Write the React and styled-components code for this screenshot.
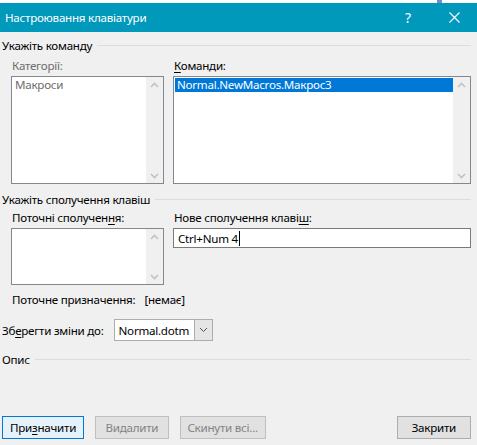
import React from 'react';
import styled, { createGlobalStyle } from 'styled-components';

const GlobalStyle = createGlobalStyle`
  html, body {
    margin: 0;
    padding: 0;
    background: #f0f0f0;
  }
  body {
    font-family: "Noto Sans", "Open Sans", sans-serif;
    font-size: 11.6px;
    letter-spacing: -0.25px;
    color: #000;
  }
`;

const Window = styled.div`
  width: 477px;
  height: 445px;
  display: flex;
  flex-direction: column;
  background: #f0f0f0;
  overflow: hidden;
`;

const TopStrip = styled.div`
  height: 3px;
  background: #fff;
  display: flex;
  padding-left: 437px;
`;

const StripMark = styled.div`
  width: 5px;
  height: 3px;
  background: #6c8fd0;
`;

const TitleBar = styled.div`
  height: 29px;
  background: #0099bc;
  color: #fff;
  display: flex;
  align-items: center;
  padding-left: 5px;
`;

const TitleText = styled.div`
  flex: 1;
`;

const TitleButton = styled.div`
  width: 46px;
  height: 29px;
  display: flex;
  align-items: center;
  justify-content: center;
  font-size: 14px;
`;

const Content = styled.div`
  display: flex;
  flex-direction: column;
  padding: 0 6px 0 2px;
`;

const GroupHeader = styled.div`
  display: flex;
  align-items: center;
  gap: 5px;
  height: 16px;
  margin-top: ${p => p.$top}px;
`;

const Rule = styled.div`
  flex: 1;
  height: 1px;
  background: #dcdcdc;
`;

const Columns = styled.div`
  display: flex;
  gap: 9px;
  padding-left: 9px;
  margin-top: ${p => p.$top}px;
`;

const Column = styled.div`
  display: flex;
  flex-direction: column;
  width: ${p => p.$w}px;
`;

const Label = styled.div`
  height: 16px;
  line-height: 16px;
  margin-bottom: 2px;
  padding-left: 1px;
  color: ${p => (p.$disabled ? '#6d6d6d' : '#000')};
  white-space: nowrap;
`;

const U = styled.span`
  text-decoration: underline;
  text-underline-offset: 2px;
`;

const ListBox = styled.div`
  height: ${p => p.$h}px;
  box-sizing: border-box;
  border: 1px solid #828790;
  background: #fff;
  display: flex;
`;

const ListItems = styled.div`
  flex: 1;
  padding: 1px 0 0 1px;
`;

const ListItem = styled.div`
  height: 14px;
  line-height: 14px;
  padding-left: 2px;
  color: ${p => (p.$selected ? '#fff' : p.$muted ? '#6d6d6d' : '#000')};
  background: ${p => (p.$selected ? '#0078d7' : 'transparent')};
  white-space: nowrap;
`;

const ScrollTrack = styled.div`
  width: 17px;
  background: #f0f0f0;
  display: flex;
  flex-direction: column;
  justify-content: space-between;
  align-items: center;
  padding: 5px 0 4px;
`;

const TextInput = styled.div`
  height: 20px;
  box-sizing: border-box;
  border: 1px solid #7a7a7a;
  background: #fff;
  display: flex;
  align-items: center;
  padding-left: 4px;
`;

const Caret = styled.span`
  display: inline-block;
  width: 1px;
  height: 15px;
  background: #000;
  margin-left: 1px;
`;

const InfoRow = styled.div`
  display: flex;
  height: 16px;
  align-items: center;
  padding-left: 10px;
  margin-top: 6px;
`;

const InfoValue = styled.span`
  margin-left: 9px;
`;

const SaveRow = styled.div`
  display: flex;
  align-items: center;
  gap: 10px;
  margin-top: 12px;
`;

const Select = styled.div`
  width: 99px;
  height: 22px;
  box-sizing: border-box;
  border: 1px solid #adadad;
  background: #fff;
  display: flex;
`;

const SelectValue = styled.div`
  flex: 1;
  display: flex;
  align-items: center;
  padding-left: 4px;
`;

const SelectArrow = styled.div`
  width: 17px;
  background: #e5e5e5;
  border-left: 1px solid #adadad;
  display: flex;
  align-items: center;
  justify-content: center;
`;

const ButtonBar = styled.div`
  display: flex;
  gap: 11px;
  margin-top: 49px;
`;

const Button = styled.div`
  height: 23px;
  box-sizing: border-box;
  width: ${p => p.$w}px;
  display: flex;
  align-items: center;
  justify-content: center;
  border: 1px solid
    ${p => (p.$default ? '#0078d7' : p.$disabled ? '#bfbfbf' : '#adadad')};
  background: ${p => (p.$default ? '#e5f1fb' : '#e1e1e1')};
  color: ${p => (p.$disabled ? '#838383' : '#000')};
  margin-left: ${p => p.$push || 0}px;
`;

function Chevron({ up }) {
  return (
    <svg width="9" height="6" viewBox="0 0 9 6">
      <path
        d={up ? 'M1 5 L4.5 1.5 L8 5' : 'M1 1 L4.5 4.5 L8 1'}
        fill="none"
        stroke="#c2c2c2"
        strokeWidth="1.6"
      />
    </svg>
  );
}

function Scroller() {
  return (
    <ScrollTrack>
      <Chevron up />
      <Chevron />
    </ScrollTrack>
  );
}

export default function App() {
  return (
    <Window>
      <GlobalStyle />
      <TopStrip>
        <StripMark />
      </TopStrip>
      <TitleBar>
        <TitleText>Настроювання клавіатури</TitleText>
        <TitleButton>?</TitleButton>
        <TitleButton>
          <svg width="11" height="11" viewBox="0 0 11 11">
            <path d="M0.5 0.5 L10.5 10.5 M10.5 0.5 L0.5 10.5" stroke="#fff" strokeWidth="1.1" />
          </svg>
        </TitleButton>
      </TitleBar>
      <Content>
        <GroupHeader $top={5}>
          Укажіть команду
          <Rule />
        </GroupHeader>
        <Columns $top={5}>
          <Column $w={153}>
            <Label $disabled>Категорії:</Label>
            <ListBox $h={108}>
              <ListItems>
                <ListItem $muted>Макроси</ListItem>
              </ListItems>
              <Scroller />
            </ListBox>
          </Column>
          <Column $w={298}>
            <Label>
              <U>К</U>оманди:
            </Label>
            <ListBox $h={108}>
              <ListItems>
                <ListItem $selected>Normal.NewMacros.Макрос3</ListItem>
              </ListItems>
              <Scroller />
            </ListBox>
          </Column>
        </Columns>
        <GroupHeader $top={7}>
          Укажіть сполучення клавіш
          <Rule />
        </GroupHeader>
        <Columns $top={3}>
          <Column $w={153}>
            <Label>
              Поточні сполучен<U>н</U>я:
            </Label>
            <ListBox $h={57}>
              <ListItems />
              <Scroller />
            </ListBox>
          </Column>
          <Column $w={298}>
            <Label>
              Нове сполучення клаві<U>ш</U>:
            </Label>
            <TextInput>
              Ctrl+Num 4<Caret />
            </TextInput>
          </Column>
        </Columns>
        <InfoRow>
          Поточне призначення:
          <InfoValue>[немає]</InfoValue>
        </InfoRow>
        <SaveRow>
          <span>
            Зб<U>е</U>регти зміни до:
          </span>
          <Select>
            <SelectValue>Normal.dotm</SelectValue>
            <SelectArrow>
              <svg width="9" height="6" viewBox="0 0 9 6">
                <path d="M1 1 L4.5 4.5 L8 1" fill="none" stroke="#555" strokeWidth="1" />
              </svg>
            </SelectArrow>
          </Select>
        </SaveRow>
        <GroupHeader $top={10}>
          Опис
          <Rule />
        </GroupHeader>
        <ButtonBar>
          <Button $w={83} $default>
            При<U>з</U>начити
          </Button>
          <Button $w={74} $disabled>
            Видалити
          </Button>
          <Button $w={87} $disabled>
            Скинути всі...
          </Button>
          <Button $w={75} $push={120}>
            Закрити
          </Button>
        </ButtonBar>
      </Content>
    </Window>
  );
}
